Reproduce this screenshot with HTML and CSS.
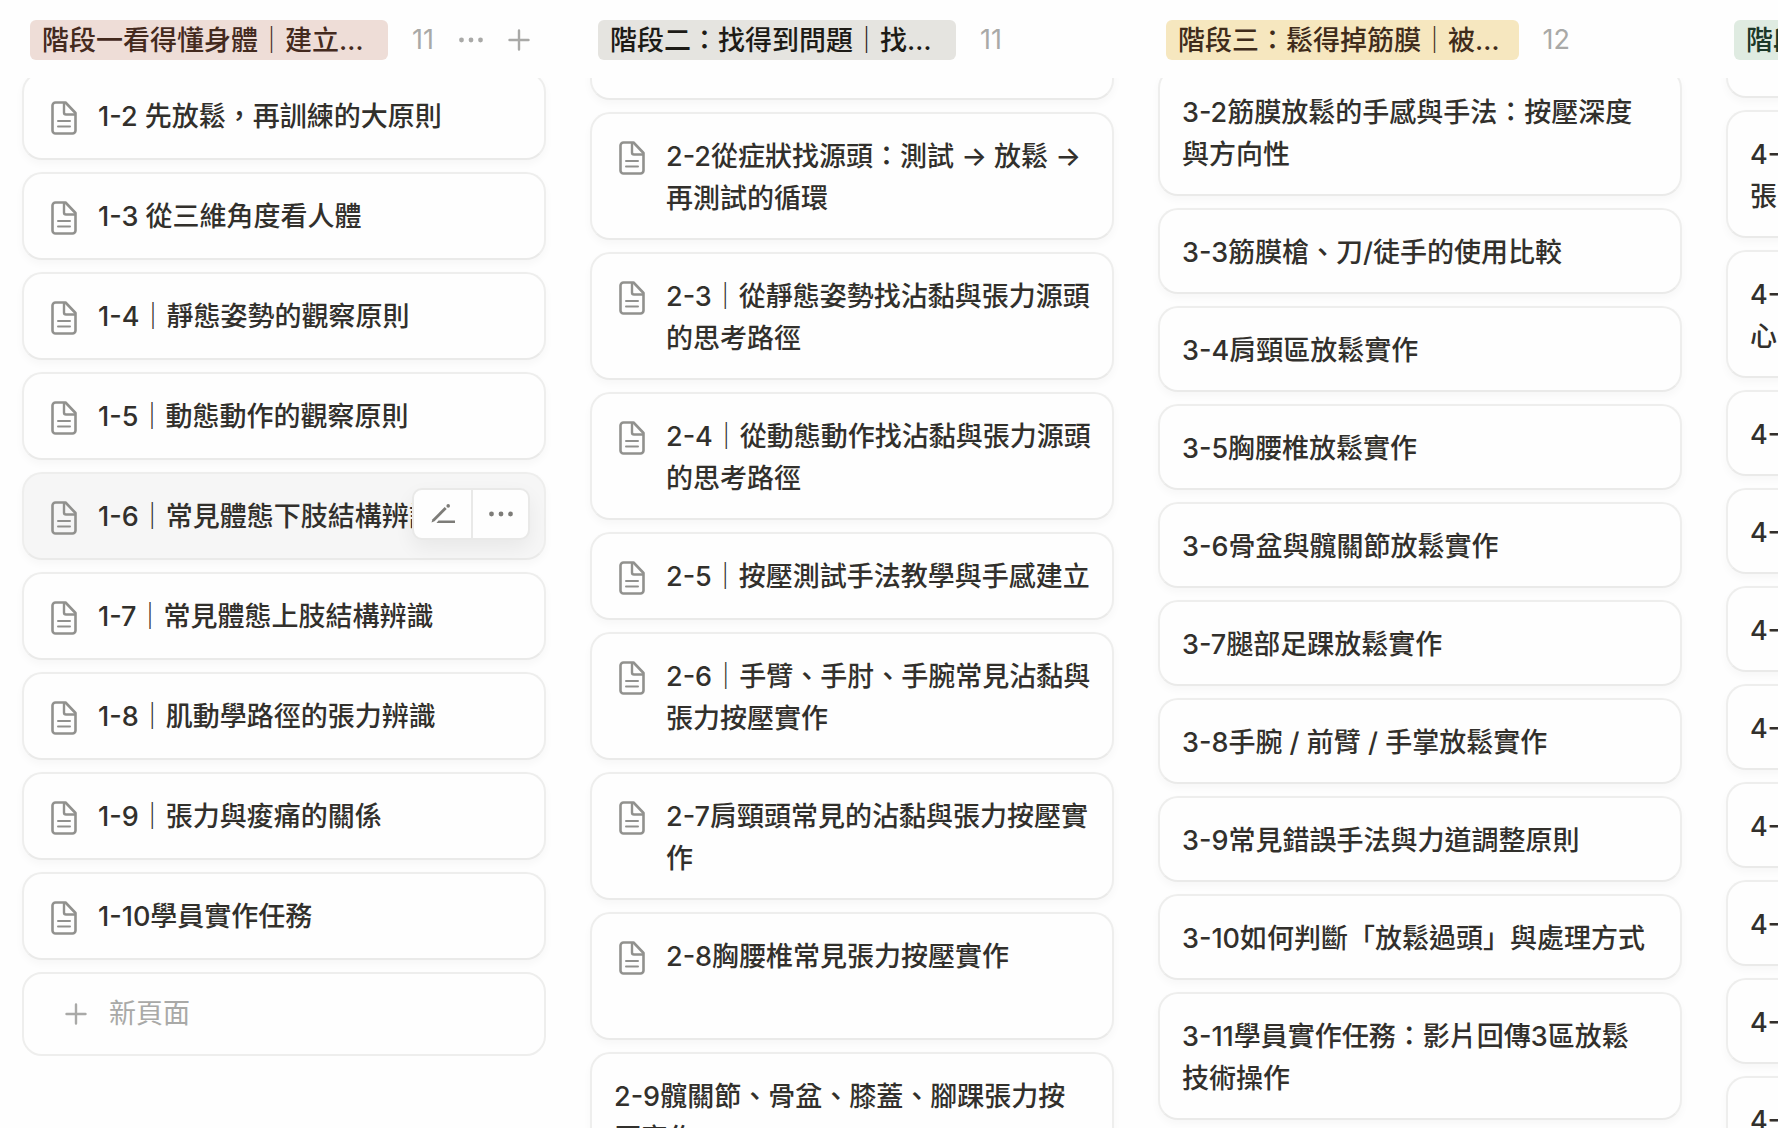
FILE: index.html
```html
<!DOCTYPE html>
<html lang="zh-Hant">
<head>
<meta charset="utf-8">
<meta name="viewport" content="width=device-width, initial-scale=1">
<title>階段看板</title>
<link rel="stylesheet" href="styles.css">
</head>
<body>
<svg class="sprite" aria-hidden="true">
  <symbol id="doc" viewBox="0 0 26 34">
    <path d="M5 1.500h9.500L24.500 12v17.500a3 3 0 0 1-3 3H4.500a3 3 0 0 1-3-3v-25a3 3 0 0 1 3-3z" fill="none" stroke="currentColor" stroke-width="2.600" stroke-linejoin="round"/>
    <path d="M13 2v9.500a2 2 0 0 0 2 2h9.500" fill="none" stroke="currentColor" stroke-width="2.400"/>
    <path d="M7 20h12M7 25.500h12" fill="none" stroke="currentColor" stroke-width="2" stroke-linecap="round"/>
  </symbol>
  <symbol id="plus" viewBox="0 0 22 22">
    <path d="M11 1.500v19M1.500 11h19" fill="none" stroke="currentColor" stroke-width="2.400" stroke-linecap="round"/>
  </symbol>
  <symbol id="dots" viewBox="0 0 26 22">
    <circle cx="3.500" cy="11" r="2.400"/><circle cx="13" cy="11" r="2.400"/><circle cx="22.500" cy="11" r="2.400"/>
  </symbol>
  <symbol id="edit" viewBox="0 0 26 22">
    <path d="M1.500 19.500L2.500 16.200 14.700 4l2 2L4.500 18.200z"/>
    <circle cx="18.200" cy="2.900" r="1.800"/>
    <path d="M8.500 17.500h16.500v2.400H6.500z"/>
  </symbol>
</svg>

<main class="board">
  <div class="heads">
    <header class="head">
      <h2 class="pill pill-brown">階段一看得懂身體｜建立…</h2>
      <span class="count">11</span>
      <div class="head-actions">
        <button class="icon-button" type="button" aria-label="更多"><svg class="icon-dots"><use href="#dots"/></svg></button>
        <button class="icon-button" type="button" aria-label="新增"><svg class="icon-plus"><use href="#plus"/></svg></button>
      </div>
    </header>
    <header class="head">
      <h2 class="pill pill-gray">階段二：找得到問題｜找…</h2>
      <span class="count">11</span>
      <div class="head-actions"></div>
    </header>
    <header class="head">
      <h2 class="pill pill-yellow">階段三：鬆得掉筋膜｜被…</h2>
      <span class="count">12</span>
      <div class="head-actions"></div>
    </header>
    <header class="head">
      <h2 class="pill pill-green">階段四</h2>
      <div class="head-actions"></div>
    </header>
  </div>

  <div class="lanes">
    <section class="lane lane-one">
      <article class="card has-icon"><svg class="doc"><use href="#doc"/></svg><h3>1-2 先放鬆，再訓練的大原則</h3></article>
      <article class="card has-icon"><svg class="doc"><use href="#doc"/></svg><h3>1-3 從三維角度看人體</h3></article>
      <article class="card has-icon"><svg class="doc"><use href="#doc"/></svg><h3>1-4｜靜態姿勢的觀察原則</h3></article>
      <article class="card has-icon"><svg class="doc"><use href="#doc"/></svg><h3>1-5｜動態動作的觀察原則</h3></article>
      <article class="card has-icon is-hovered"><svg class="doc"><use href="#doc"/></svg><h3>1-6｜常見體態下肢結構辨識</h3>
        <div class="toolbar">
          <button type="button" aria-label="編輯"><svg class="icon-dots"><use href="#edit"/></svg></button>
          <button type="button" aria-label="更多"><svg class="icon-dots"><use href="#dots"/></svg></button>
        </div>
      </article>
      <article class="card has-icon"><svg class="doc"><use href="#doc"/></svg><h3>1-7｜常見體態上肢結構辨識</h3></article>
      <article class="card has-icon"><svg class="doc"><use href="#doc"/></svg><h3>1-8｜肌動學路徑的張力辨識</h3></article>
      <article class="card has-icon"><svg class="doc"><use href="#doc"/></svg><h3>1-9｜張力與痠痛的關係</h3></article>
      <article class="card has-icon"><svg class="doc"><use href="#doc"/></svg><h3>1-10學員實作任務</h3></article>
      <button class="new-page" type="button"><svg class="icon-plus"><use href="#plus"/></svg>新頁面</button>
    </section>

    <section class="lane lane-two">
      <article class="card has-icon"></article>
      <article class="card has-icon"><svg class="doc"><use href="#doc"/></svg><h3>2-2從症狀找源頭：測試 → 放鬆 → 再測試的循環</h3></article>
      <article class="card has-icon"><svg class="doc"><use href="#doc"/></svg><h3>2-3｜從靜態姿勢找沾黏與張力源頭的思考路徑</h3></article>
      <article class="card has-icon"><svg class="doc"><use href="#doc"/></svg><h3>2-4｜從動態動作找沾黏與張力源頭的思考路徑</h3></article>
      <article class="card has-icon"><svg class="doc"><use href="#doc"/></svg><h3>2-5｜按壓測試手法教學與手感建立</h3></article>
      <article class="card has-icon"><svg class="doc"><use href="#doc"/></svg><h3>2-6｜手臂、手肘、手腕常見沾黏與張力按壓實作</h3></article>
      <article class="card has-icon"><svg class="doc"><use href="#doc"/></svg><h3>2-7肩頸頭常見的沾黏與張力按壓實作</h3></article>
      <article class="card has-icon two-line"><svg class="doc"><use href="#doc"/></svg><h3>2-8胸腰椎常見張力按壓實作</h3></article>
      <article class="card"><h3>2-9髖關節、骨盆、膝蓋、腳踝張力按壓實作</h3></article>
    </section>

    <section class="lane lane-three">
      <article class="card"><h3>3-2筋膜放鬆的手感與手法：按壓深度與方向性</h3></article>
      <article class="card"><h3>3-3筋膜槍、刀/徒手的使用比較</h3></article>
      <article class="card"><h3>3-4肩頸區放鬆實作</h3></article>
      <article class="card"><h3>3-5胸腰椎放鬆實作</h3></article>
      <article class="card"><h3>3-6骨盆與髖關節放鬆實作</h3></article>
      <article class="card"><h3>3-7腿部足踝放鬆實作</h3></article>
      <article class="card"><h3>3-8手腕 / 前臂 / 手掌放鬆實作</h3></article>
      <article class="card"><h3>3-9常見錯誤手法與力道調整原則</h3></article>
      <article class="card"><h3>3-10如何判斷「放鬆過頭」與處理方式</h3></article>
      <article class="card"><h3>3-11學員實作任務：影片回傳3區放鬆技術操作</h3></article>
    </section>

    <section class="lane lane-four">
      <article class="card"></article>
      <article class="card"><h3>4-<br>張</h3></article>
      <article class="card"><h3>4-<br>心</h3></article>
      <article class="card"><h3>4-</h3></article>
      <article class="card"><h3>4-</h3></article>
      <article class="card"><h3>4-</h3></article>
      <article class="card"><h3>4-</h3></article>
      <article class="card"><h3>4-</h3></article>
      <article class="card"><h3>4-</h3></article>
      <article class="card"><h3>4-</h3></article>
      <article class="card"><h3>4-</h3></article>
    </section>
  </div>
</main>
</body>
</html>
```

FILE: styles.css
```css
* {
  box-sizing: border-box;
}

body {
  margin: 0;
  background: #fefefe;
  color: #32302c;
  font-family: Inter, "Noto Sans CJK TC", sans-serif;
  font-size: 27px;
  line-height: 42px;
}

h2,
h3 {
  margin: 0;
  font-size: inherit;
  font-weight: 500;
}

button {
  padding: 0;
  border: 0;
  background: none;
  color: inherit;
  font: inherit;
  cursor: pointer;
}

svg {
  display: block;
  flex: none;
  fill: currentColor;
}

.sprite {
  position: absolute;
  width: 0;
  height: 0;
}

.board {
  display: flex;
  flex-direction: column;
  height: 100vh;
  overflow: hidden;
}

.heads,
.lanes {
  display: grid;
  grid-template-columns: repeat(4, 524px);
  column-gap: 44px;
  padding: 0 22px;
}

/* column headings */
.heads {
  flex: none;
  padding-top: 20px;
  padding-bottom: 18px;
}

.head {
  display: flex;
  align-items: center;
  padding-left: 8px;
}

.pill {
  flex: 1;
  min-width: 0;
  height: 40px;
  padding: 0 12px;
  border-radius: 6px;
  line-height: 42px;
  white-space: nowrap;
}

.pill-brown {
  background: #eeddd7;
  color: #442a1e;
}

.pill-gray {
  background: #e5e4e0;
  color: #1d1b16;
}

.pill-yellow {
  background: #f6e7bf;
  color: #402c1b;
}

.pill-green {
  background: #dfebe1;
  color: #1c3829;
}

.count {
  margin-left: 24px;
  color: #a9a9a7;
  line-height: 40px;
}

.head-actions {
  display: flex;
  gap: 24px;
  width: 112px;
  padding-left: 24px;
  color: #a9a9a7;
}

.icon-dots {
  width: 26px;
  height: 22px;
}

.icon-plus {
  width: 22px;
  height: 22px;
}

/* card lanes, each scrolled to its own position */
.lanes {
  flex: 1;
  min-height: 0;
  align-items: start;
  overflow: hidden;
}

.lane {
  display: flex;
  flex-direction: column;
  gap: 12px;
}

.lane-one {
  margin-top: -6px;
}

.lane-two,
.lane-four {
  margin-top: -66px;
}

.lane-three {
  margin-top: -10px;
}

.card {
  position: relative;
  display: flex;
  gap: 21px;
  min-height: 86px;
  padding: 22px 28px 18px 22px;
  border: 2px solid #eeeeed;
  border-bottom-color: #eaeae9;
  border-radius: 20px;
  background: #fefefe;
  box-shadow: 0 4px 8px rgba(0, 0, 0, 0.03);
}

.has-icon {
  min-height: 88px;
  padding-right: 18px;
  padding-left: 27px;
}

.two-line {
  min-height: 128px;
}

.doc {
  width: 26px;
  height: 34px;
  margin-top: 5px;
  color: #91918e;
}

.is-hovered {
  background: #f6f6f6;
}

.is-hovered h3 {
  white-space: nowrap;
}

.toolbar {
  position: absolute;
  top: 14px;
  right: 14px;
  display: flex;
  border: 2px solid #e9e9e8;
  border-radius: 10px;
  background: #fefefe;
  color: #7d7c78;
  box-shadow: 0 8px 20px rgba(0, 0, 0, 0.06);
}

.toolbar button {
  display: flex;
  align-items: center;
  justify-content: center;
  width: 57px;
  height: 48px;
}

.toolbar button + button {
  border-left: 2px solid #e9e9e8;
}

.new-page {
  display: flex;
  align-items: center;
  gap: 22px;
  height: 84px;
  padding-left: 41px;
  border: 2px solid #eeeeed;
  border-radius: 20px;
  color: #a9a9a7;
}
```
